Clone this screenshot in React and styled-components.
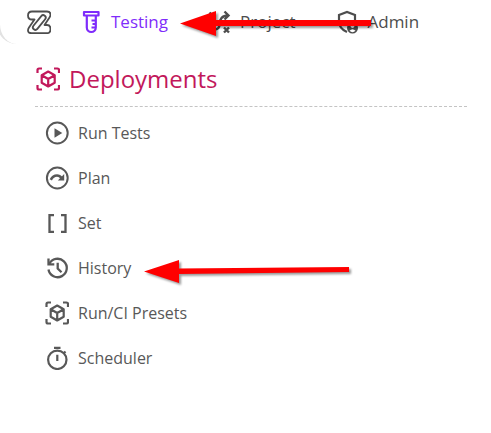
import React from 'react';
import styled, { createGlobalStyle } from 'styled-components';

const GlobalStyle = createGlobalStyle`
body {
  margin: 0;
  background: #fff;
  color: #555;
  font-family: "Open Sans", sans-serif;
}
svg {
  display: block;
  flex: none;
}`;

const PAGE = styled.div`
position: relative;
overflow: hidden;
`;

const TOPBAR = styled.nav`
display: flex;
align-items: center;
gap: 28px;
height: 44px;
margin-left: -3px;
padding-left: 27px;
border-left: 3px solid #e2e2e2;
border-bottom-left-radius: 20px;
`;

const TABS = styled.div`
display: flex;
gap: 40px;
`;

const TABLINK = styled.a`
display: flex;
align-items: center;
gap: 8px;
font-size: 17px;
line-height: 24px;
color: ${({ $active }) => ($active ? '#7f2cfb' : '#4d4d4d')};
text-decoration: none;
`;

const MENU = styled.section`
padding: 15px 24px 0 35px;
`;

const HEADING = styled.h2`
display: flex;
align-items: center;
gap: 9px;
margin: 0;
padding: 0 0 7px 1px;
border-bottom: 1px dashed #c4c4c4;
font-size: 24px;
line-height: 40px;
font-weight: 400;
color: #c2185b;
`;

const LIST = styled.ul`
list-style: none;
margin: 0;
padding: 3px 10px;
`;

const ITEM = styled.a`
display: flex;
align-items: center;
gap: 9px;
height: 45px;
font-size: 16px;
color: #585858;
text-decoration: none;
`;

const ARROWS = styled.svg`
position: absolute;
top: 0;
left: 0;
pointer-events: none;
filter: drop-shadow(2px 2px 1px rgba(0,0,0,0.4));
`;

const Icon = ({ children, width = 2 }) => (
  <svg width="24" height="24" viewBox="0 0 24 24" fill="none" stroke="currentColor" strokeWidth={width} aria-hidden="true">
    {children}
  </svg>
);

const LogoIcon = () => (
  <Icon width={1.8}>
    <path d="M7.500 9.500H5Q1 9.500 1 5.500Q1 1.500 5 1.500H20Q23.500 1.500 23.500 4.500Q23.500 6 22.500 7.500L17.500 15H20Q23.500 15 23.500 19.200Q23.500 23.200 20 23.200H4.500Q1 23.200 1 20.500Q1 19 2 17.500Z" strokeLinejoin="round" />
    <rect x="9.800" y="3.800" width="5" height="17.400" rx="2.500" transform="rotate(39 12.300 12.500)" />
  </Icon>
);

const TubeIcon = () => (
  <Icon width={2.2}>
    <path d="M5 2H19.500V5.500H5ZM7.800 5.500V17.500A4.500 4.500 0 0 0 16.800 17.500V5.500" strokeLinejoin="round" />
    <path d="M12.500 10.500H17M13.500 14H17M12.500 17.500H17" strokeWidth="1.800" />
  </Icon>
);

const TacticIcon = () => (
  <Icon width={2.4}>
    <path d="M1.500 2.500L6.500 7.500M6.500 2.500L1.500 7.500M16 17.500L21 22.500M21 17.500L16 22.500" />
    <path d="M7 19.500Q11.500 19 11.500 14.500Q11.500 5.500 20 5.500M16.500 1.500L20.500 5.500L16.500 9.500" />
    <circle cx="4" cy="19.500" r="2.800" />
  </Icon>
);

const ShieldIcon = () => (
  <Icon width={2.2}>
    <path d="M20 11V5L12 2L4 5V11.500Q4 18.500 12 22" />
    <circle cx="17.500" cy="18" r="5.500" fill="currentColor" stroke="none" />
    <circle cx="17.500" cy="16.300" r="1.700" fill="#fff" stroke="none" />
    <path d="M14.500 20.800Q17.500 17.500 20.500 20.800Q17.500 23.500 14.500 20.800Z" fill="#fff" stroke="none" />
  </Icon>
);

const CubeScanIcon = () => (
  <Icon width={2.2}>
    <path d="M1.500 6V3Q1.500 1.500 3 1.500H6M18 1.500H21.500Q23 1.500 23 3V6M23 18V21Q23 22.500 21.500 22.500H18M6 22.500H3Q1.500 22.500 1.500 21V18" />
    <path d="M12.200 4.500L18.700 8.200V15.800L12.200 19.500L5.700 15.800V8.200ZM5.700 8.200L12.200 12L18.700 8.200M12.200 12V19.500" strokeLinejoin="round" />
  </Icon>
);

const PlayIcon = () => (
  <Icon>
    <circle cx="12.300" cy="12" r="10.400" />
    <path d="M9.500 7.200V16.800L17.300 12Z" fill="currentColor" stroke="none" />
  </Icon>
);

const PlanIcon = () => (
  <Icon>
    <circle cx="12.300" cy="12" r="10.400" />
    <path d="M5.800 13.800Q8 9.500 12 9.500Q14.800 9.500 16.500 12" strokeWidth="2.600" />
    <path d="M19.200 8V14.500H12.800Z" fill="currentColor" stroke="none" />
  </Icon>
);

const SetIcon = () => (
  <Icon width={2.3}>
    <path d="M9 4.200H4.500V20.800H9M16 4.200H20.500V20.800H16" />
  </Icon>
);

const HistoryIcon = () => (
  <Icon width={2.3}>
    <path d="M4.200 8.200A9.200 9.200 0 1 1 3.500 13.500" />
    <path d="M3.500 2.500V8.300H9.300M12.700 6.800V12.500L16.500 16.300" />
  </Icon>
);

const TimerIcon = () => (
  <Icon width={2.2}>
    <circle cx="12.300" cy="13.800" r="9.200" />
    <path d="M9 1.800H15.500M12.300 8.800V15M18.500 7.500L20.500 5.500" />
  </Icon>
);

const items = [
  { label: 'Run Tests', icon: <PlayIcon /> },
  { label: 'Plan', icon: <PlanIcon /> },
  { label: 'Set', icon: <SetIcon /> },
  { label: 'History', icon: <HistoryIcon /> },
  { label: 'Run/CI Presets', icon: <CubeScanIcon /> },
  { label: 'Scheduler', icon: <TimerIcon /> },
];

const App = () => (
  <PAGE>
    <GlobalStyle />
    <TOPBAR>
      <TABLINK href="#home" aria-label="Home"><LogoIcon /></TABLINK>
      <TABS>
        <TABLINK href="#testing" $active><TubeIcon />Testing</TABLINK>
        <TABLINK href="#project"><TacticIcon />Project</TABLINK>
        <TABLINK href="#admin"><ShieldIcon />Admin</TABLINK>
      </TABS>
    </TOPBAR>
    <MENU>
      <HEADING><CubeScanIcon />Deployments</HEADING>
      <LIST>
        {items.map(({ label, icon }) => (
          <li key={label}><ITEM href="#menu">{icon}{label}</ITEM></li>
        ))}
      </LIST>
    </MENU>
    <ARROWS width="400" height="300" fill="#f00" aria-hidden="true">
      <path d="M180 23.500L216 11V20H371V26H216V36Z" />
      <path d="M144 271.500L179 260V268.500L349 267V272L179 274V283Z" />
    </ARROWS>
  </PAGE>
);

export default App;
